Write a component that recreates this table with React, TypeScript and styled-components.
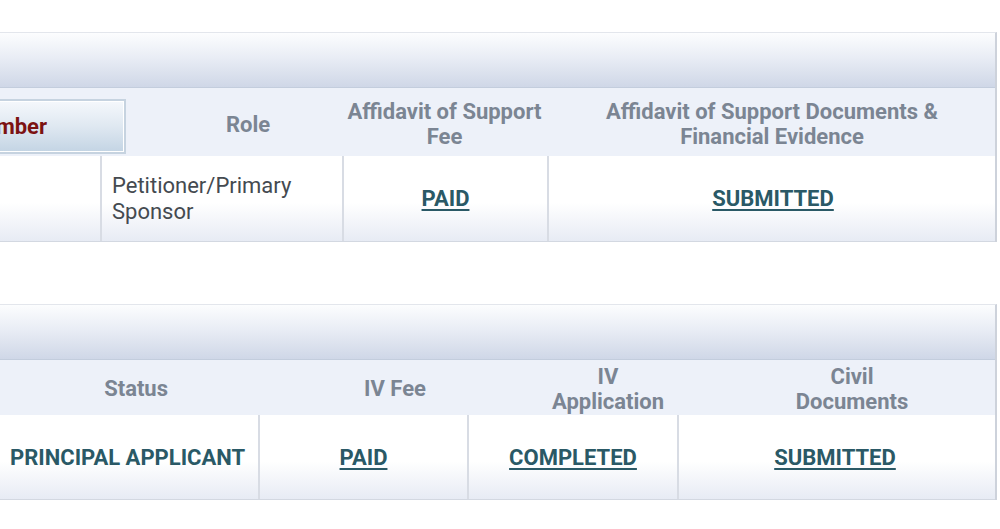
import React from "react";
import styled, { createGlobalStyle } from "styled-components";

const Global = createGlobalStyle`
  html, body { margin: 0; padding: 0; background: #ffffff; overflow: hidden; }
  body { font-family: Roboto, "Liberation Sans", Arial, sans-serif; }
`;

const Page = styled.div`
  width: 1197px;
  margin-left: -200px;
  padding-top: 32px;
  display: flex;
  flex-direction: column;
  gap: 62px;
`;

const Table = styled.div`
  display: flex;
  flex-direction: column;
  border-top: 1px solid #e3e6ec;
  border-right: 2px solid #cdd2db;
`;

const Band = styled.div`
  height: 54px;
  background: linear-gradient(to bottom, #fcfdfe 0%, #e9edf5 45%, #cfd7e7 100%);
  border-bottom: 1px solid #c3cddd;
`;

const HeadRow = styled.div<{ $cols: string; $h: number }>`
  display: grid;
  grid-template-columns: ${(p) => p.$cols};
  height: ${(p) => p.$h}px;
  background: #edf1f9;
`;

const HeadCell = styled.div<{ $pl?: number; $pr?: number; $justify?: string; $pt?: number }>`
  display: flex;
  align-items: center;
  justify-content: ${(p) => p.$justify || "center"};
  text-align: center;
  padding-left: ${(p) => p.$pl || 0}px;
  padding-right: ${(p) => p.$pr || 0}px;
  padding-top: ${(p) => p.$pt || 0}px;
  font-weight: 700;
  font-size: 22px;
  line-height: 25px;
  color: #7b8593;
  white-space: nowrap;
`;

const SortButton = styled.div`
  box-sizing: border-box;
  width: 280px;
  height: 55px;
  margin-top: 11px;
  display: flex;
  align-items: center;
  justify-content: flex-end;
  padding-right: 77px;
  border: 2px solid #c6d3e0;
  box-shadow: inset 0 0 0 1px #ffffff;
  background: linear-gradient(to bottom, #f5f8fc 0%, #dfe8f1 50%, #c3d4e4 100%);
  font-weight: 700;
  font-size: 22px;
  color: #7c1212;
`;

const ButtonCell = styled.div`
  display: flex;
  justify-content: flex-end;
  align-items: flex-start;
`;

const BodyRow = styled.div<{ $cols: string; $h: number }>`
  display: grid;
  grid-template-columns: ${(p) => p.$cols};
  height: ${(p) => p.$h}px;
  background: linear-gradient(to bottom, #ffffff 0%, #ffffff 55%, #e7ebf4 100%);
  border-bottom: 1px solid #d3d8e1;
`;

const BodyCell = styled.div<{ $first?: boolean; $justify?: string; $pl?: number; $pr?: number }>`
  display: flex;
  align-items: center;
  justify-content: ${(p) => p.$justify || "center"};
  padding-left: ${(p) => p.$pl || 0}px;
  padding-right: ${(p) => p.$pr || 0}px;
  border-left: ${(p) => (p.$first ? "none" : "2px solid #d8dce4")};
  min-width: 0;
`;

const PlainText = styled.div`
  font-size: 22px;
  line-height: 26px;
  color: #444a50;
`;

const StatusLink = styled.a`
  font-weight: 700;
  font-size: 22px;
  color: #2a5966;
  text-decoration: underline;
  text-underline-offset: 3px;
  text-decoration-thickness: 2px;
  cursor: pointer;
`;

const StatusText = styled.span`
  font-weight: 700;
  font-size: 22px;
  color: #2a5966;
`;

const cols1 = "300px 242px 205px 450px";
const head1 = "326px 216px 205px 450px";
const cols2 = "458px 209px 210px 320px";
const head2 = "481px 228px 198px 290px";

export default function App() {
  return (
    <>
      <Global />
      <Page>
        <Table>
          <Band />
          <HeadRow $cols={head1} $h={68}>
            <ButtonCell>
              <SortButton>Number</SortButton>
            </ButtonCell>
            <HeadCell $pl={28} $pt={4}>Role</HeadCell>
            <HeadCell $pt={4}>
              Affidavit of Support
              <br />
              Fee
            </HeadCell>
            <HeadCell $pt={4}>
              Affidavit of Support Documents &amp;
              <br />
              Financial Evidence
            </HeadCell>
          </HeadRow>
          <BodyRow $cols={cols1} $h={85}>
            <BodyCell $first />
            <BodyCell $justify="flex-start" $pl={10}>
              <PlainText>
                Petitioner/Primary
                <br />
                Sponsor
              </PlainText>
            </BodyCell>
            <BodyCell>
              <StatusLink>PAID</StatusLink>
            </BodyCell>
            <BodyCell>
              <StatusLink>SUBMITTED</StatusLink>
            </BodyCell>
          </BodyRow>
        </Table>

        <Table>
          <Band />
          <HeadRow $cols={head2} $h={55}>
            <HeadCell $justify="flex-end" $pr={113} $pt={2}>Status</HeadCell>
            <HeadCell $pt={2}>IV Fee</HeadCell>
            <HeadCell $pt={2}>
              IV
              <br />
              Application
            </HeadCell>
            <HeadCell $pt={2}>
              Civil
              <br />
              Documents
            </HeadCell>
          </HeadRow>
          <BodyRow $cols={cols2} $h={84}>
            <BodyCell $first $justify="flex-start" $pl={210}>
              <StatusText>PRINCIPAL APPLICANT</StatusText>
            </BodyCell>
            <BodyCell>
              <StatusLink>PAID</StatusLink>
            </BodyCell>
            <BodyCell>
              <StatusLink>COMPLETED</StatusLink>
            </BodyCell>
            <BodyCell $pr={6}>
              <StatusLink>SUBMITTED</StatusLink>
            </BodyCell>
          </BodyRow>
        </Table>
      </Page>
    </>
  );
}
